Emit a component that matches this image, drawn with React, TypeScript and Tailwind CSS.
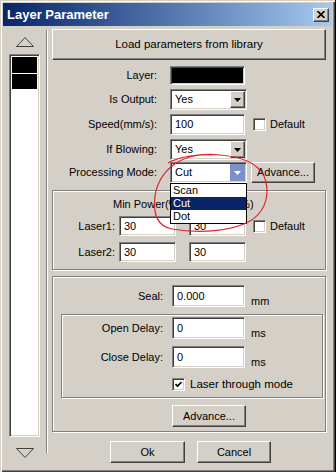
import React from 'react';

const sunken =
  'bg-white border border-t-[#808080] border-l-[#808080] border-b-white border-r-white shadow-[inset_1px_1px_0_#404040,inset_-1px_-1px_0_#d4d0c8]';
const raised =
  'bg-[#d4d0c8] border border-t-white border-l-white border-b-[#404040] border-r-[#404040] shadow-[inset_-1px_-1px_0_#808080]';
const etched = 'border border-[#808080] shadow-[inset_1px_1px_0_white,1px_1px_0_white]';

const Label = ({ w, children }: { w: string; children: React.ReactNode }) => (
  <div className={`${w} shrink-0 text-right whitespace-nowrap`}>{children}</div>
);

const TextBox = ({ value, w, h }: { value: string; w: string; h: string }) => (
  <div className={`${sunken} ${w} ${h} shrink-0 flex items-center pl-[4px]`}>{value}</div>
);

const Arrow = ({ color = '#000' }: { color?: string }) => (
  <svg width="7" height="4" viewBox="0 0 7 4">
    <polygon points="0,0 7,0 3.5,4" fill={color} />
  </svg>
);

const Combo = ({ value, active }: { value: string; active?: boolean }) => (
  <div className={`${sunken} w-[77px] h-[21px] shrink-0 flex items-center`}>
    <span className="flex-1 pl-[4px]">{value}</span>
    {active ? (
      <div className="w-[15px] h-[17px] mr-[1px] bg-[#7d90c9] flex items-center justify-center">
        <Arrow color="#fff" />
      </div>
    ) : (
      <div className={`${raised} w-[15px] h-[17px] mr-[1px] flex items-center justify-center`}>
        <Arrow />
      </div>
    )}
  </div>
);

const Check = ({ checked }: { checked?: boolean }) => (
  <div className={`${sunken} w-[13px] h-[13px] shrink-0 flex items-center justify-center`}>
    {checked && (
      <svg width="7" height="7" viewBox="0 0 7 7">
        <path d="M0.5 3 L2.5 5 L6.5 1" stroke="#000" strokeWidth="1.6" fill="none" />
      </svg>
    )}
  </div>
);

const Btn = ({ w, h, children }: { w: string; h: string; children: React.ReactNode }) => (
  <div className={`${raised} ${w} ${h} shrink-0 flex items-center justify-center`}>{children}</div>
);

const Triangle = ({ up }: { up?: boolean }) => (
  <svg width="18" height="10" viewBox="0 0 18 10">
    <polygon
      points={up ? '9,0.5 17.5,9.5 0.5,9.5' : '0.5,0.5 17.5,0.5 9,9.5'}
      fill="#d4d0c8"
      stroke="#404040"
      strokeWidth="1"
    />
  </svg>
);

export default function App() {
  return (
    <div
      className="relative w-[336px] h-[472px] flex bg-[#d4d0c8] text-black text-[11px] leading-none"
      style={{ fontFamily: '"Liberation Sans", Arial, sans-serif' }}
    >
      <div className="w-[335px] h-[472px] p-[3px] flex flex-col shadow-[inset_1px_1px_0_#d4d0c8,inset_2px_2px_0_white,inset_-1px_-1px_0_#404040,inset_-2px_-2px_0_#808080]">
        {/* title bar */}
        <div className="h-[23px] shrink-0 flex items-center justify-between pl-[4px] pr-[3px] bg-gradient-to-r from-[#0a246a] to-[#a6caf0]">
          <span className="text-white font-bold text-[13px]">Layer Parameter</span>
          <Btn w="w-[16px]" h="h-[14px]">
            <svg width="8" height="7" viewBox="0 0 8 7">
              <path d="M0.5 0 L7.5 7 M7.5 0 L0.5 7" stroke="#000" strokeWidth="1.6" />
            </svg>
          </Btn>
        </div>

        {/* body */}
        <div className="flex flex-1">
          {/* layer list */}
          <div className="w-[43px] shrink-0 flex flex-col items-center">
            <div className="mt-[11px] h-[10px] flex">
              <Triangle up />
            </div>
            <div className={`${sunken} mt-[7px] w-[31px] h-[383px] p-[2px] flex flex-col`}>
              <div className="h-[16px] bg-black" />
              <div className="h-[16px] bg-black border-t border-white" />
            </div>
            <div className="mt-[11px] h-[10px] flex">
              <Triangle />
            </div>
          </div>
          <div className="mt-[4px] h-[423px] w-[2px] border-l border-[#808080] bg-white" />

          {/* parameters */}
          <div className="flex flex-col pl-[4px] pt-[3px] w-[278px]">
            <Btn w="w-[274px]" h="h-[31px]">
              <span className="text-[11.5px]">Load parameters from library</span>
            </Btn>

            <div className="mt-[6px] h-[19px] flex items-center gap-[13px]">
              <Label w="w-[105px]">Layer:</Label>
              <div className={`${sunken} w-[75px] h-[19px] !bg-black`} />
            </div>
            <div className="mt-[4px] h-[21px] flex items-center gap-[13px]">
              <Label w="w-[105px]">Is Output:</Label>
              <Combo value="Yes" />
            </div>
            <div className="mt-[4px] h-[21px] flex items-center gap-[13px]">
              <Label w="w-[105px]">Speed(mm/s):</Label>
              <TextBox value="100" w="w-[75px]" h="h-[21px]" />
              <div className="flex items-center gap-[4px] -ml-[5px]">
                <Check />
                <span>Default</span>
              </div>
            </div>
            <div className="mt-[4px] h-[21px] flex items-center gap-[13px]">
              <Label w="w-[105px]">If Blowing:</Label>
              <Combo value="Yes" />
            </div>
            <div className="mt-[2px] h-[21px] flex items-center gap-[13px]">
              <Label w="w-[105px]">Processing Mode:</Label>
              <div className="relative z-10">
                <Combo value="Cut" active />
                <div className="absolute left-0 top-full w-[77px] bg-white border border-black flex flex-col">
                  <div className="h-[13px] pl-[2px] flex items-center">Scan</div>
                  <div className="h-[13px] pl-[2px] flex items-center bg-[#0a246a] text-white">Cut</div>
                  <div className="h-[13px] pl-[2px] flex items-center">Dot</div>
                </div>
              </div>
              <div className="-ml-[9px]">
                <Btn w="w-[64px]" h="h-[21px]">Advance...</Btn>
              </div>
            </div>

            {/* power group */}
            <div className={`${etched} mt-[7px] w-[274px] h-[80px] flex flex-col pt-[6px]`}>
              <div className="h-[14px] flex items-center">
                <div className="w-[66px] shrink-0" />
                <div className="w-[57px] flex justify-center whitespace-nowrap">Min Power(%)</div>
                <div className="w-[57px] ml-[13px] flex justify-center whitespace-nowrap">Max Power(%)</div>
              </div>
              <div className="mt-[5px] h-[20px] flex items-center">
                <Label w="w-[62px]">Laser1:</Label>
                <div className="ml-[4px]">
                  <TextBox value="30" w="w-[57px]" h="h-[20px]" />
                </div>
                <div className="ml-[13px]">
                  <TextBox value="30" w="w-[57px]" h="h-[20px]" />
                </div>
                <div className="ml-[7px] flex items-center gap-[4px]">
                  <Check />
                  <span>Default</span>
                </div>
              </div>
              <div className="mt-[6px] h-[20px] flex items-center">
                <Label w="w-[62px]">Laser2:</Label>
                <div className="ml-[4px]">
                  <TextBox value="30" w="w-[57px]" h="h-[20px]" />
                </div>
                <div className="ml-[13px]">
                  <TextBox value="30" w="w-[57px]" h="h-[20px]" />
                </div>
              </div>
            </div>

            {/* seal group */}
            <div className={`${etched} mt-[6px] w-[274px] h-[156px] flex flex-col pt-[8px]`}>
              <div className="h-[22px] flex items-center">
                <Label w="w-[110px]">Seal:</Label>
                <div className="ml-[9px]">
                  <TextBox value="0.000" w="w-[73px]" h="h-[22px]" />
                </div>
                <span className="ml-[6px] self-end">mm</span>
              </div>
              <div className={`${etched} mt-[7px] ml-[8px] mr-[2px] h-[84px] flex flex-col pt-[2px]`}>
                <div className="h-[22px] flex items-center">
                  <Label w="w-[101px]">Open Delay:</Label>
                  <div className="ml-[9px]">
                    <TextBox value="0" w="w-[73px]" h="h-[22px]" />
                  </div>
                  <span className="ml-[6px] self-end">ms</span>
                </div>
                <div className="mt-[7px] h-[22px] flex items-center">
                  <Label w="w-[101px]">Close Delay:</Label>
                  <div className="ml-[9px]">
                    <TextBox value="0" w="w-[73px]" h="h-[22px]" />
                  </div>
                  <span className="ml-[6px] self-end">ms</span>
                </div>
                <div className="mt-[10px] h-[13px] flex items-center ml-[110px] gap-[5px]">
                  <Check checked />
                  <span className="text-[11.5px]">Laser through mode</span>
                </div>
              </div>
              <div className="mt-[7px] ml-[119px]">
                <Btn w="w-[74px]" h="h-[22px]">Advance...</Btn>
              </div>
            </div>

            <div className="mt-[9px] ml-[58px] flex gap-[12px]">
              <Btn w="w-[75px]" h="h-[22px]">Ok</Btn>
              <Btn w="w-[74px]" h="h-[22px]">Cancel</Btn>
            </div>
          </div>
        </div>
      </div>
      <div className="w-[1px] h-[472px] bg-black" />

      {/* red marker scribble drawn over the dialog */}
      <svg className="absolute left-0 top-0 pointer-events-none z-20" width="336" height="472">
        <path
          d="M168 163 C178 157 200 153 220 155 C245 157 262 165 266 182 C270 200 262 214 250 221 C232 231 200 234 172 229 C156 226 153 212 155 196 C157 182 163 172 176 163 C186 157 200 154 212 155"
          stroke="#e0232b"
          strokeWidth="1.2"
          fill="none"
        />
      </svg>
    </div>
  );
}
